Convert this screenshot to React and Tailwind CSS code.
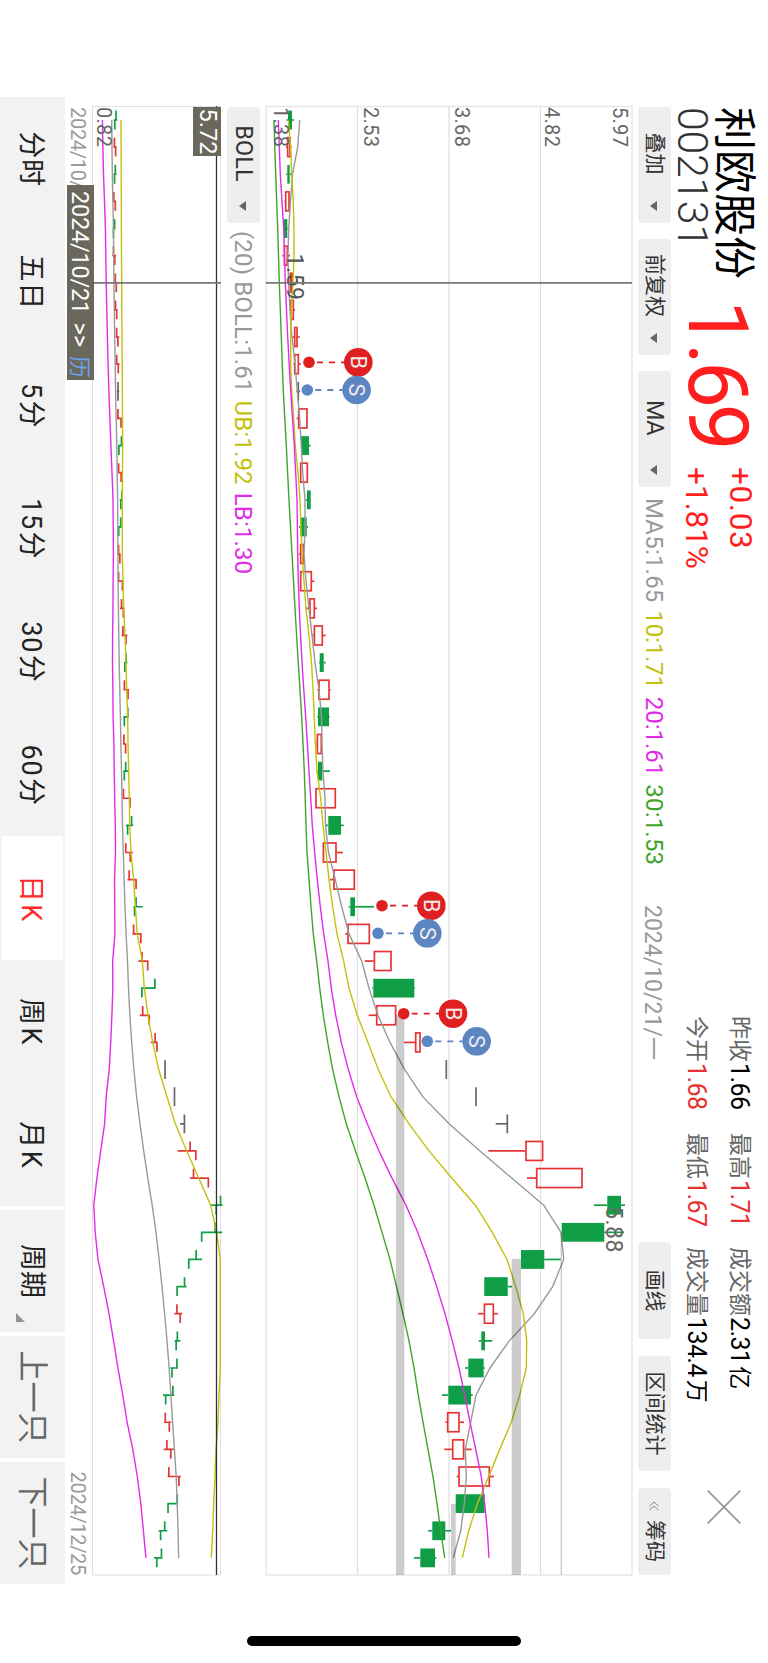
// src/App.jsx

const RED = "#e53535";
const GREEN = "#0f9d46";
const FLAT = "#666666";

// [direction, body bottom, body top, low, high], measured up from the panel floor
const CANDLES = [
  ["down", 22, 26, 20.5, 28],
  ["up", 21, 24.7, 20, 25.7],
  ["down", 21.3, 23.7, 20, 25.3],
  ["up", 19, 23.7, 18.5, 24.3],
  ["down", 18, 21.3, 17.3, 22],
  ["up", 17.7, 22, 16.3, 24],
  ["up", 23.7, 26.7, 22.7, 27.3],
  ["up", 24.3, 28, 23.3, 29],
  ["up", 28, 31.7, 26.3, 33.7],
  ["up", 28, 33, 27.3, 34.7],
  ["flat", 32.3, 32.3, 30.3, 34],
  ["up", 32, 41.7, 30.7, 41.7],
  ["down", 35, 43, 34.7, 44.7],
  ["up", 34, 42, 34, 42],
  ["down", 41, 44.7, 39.7, 44.7],
  ["down", 34.3, 40.7, 33, 42],
  ["up", 34, 38, 33, 38],
  ["up", 34, 46, 34, 48.3],
  ["up", 43.3, 49, 40, 51],
  ["up", 47.7, 57, 45.7, 59.7],
  ["down", 53.7, 57.7, 53, 59.7],
  ["up", 52.3, 63.7, 51.3, 64.7],
  ["down", 52, 63, 51.3, 63.7],
  ["up", 50.7, 56, 49, 56],
  ["down", 52, 56.3, 50.7, 64],
  ["up", 49.3, 70, 49.3, 70],
  ["down", 62.3, 75, 59.3, 77.7],
  ["up", 56.7, 70.7, 56.7, 77],
  ["up", 67.3, 89, 64, 89],
  ["down", 84.3, 89, 82.7, 108],
  ["up", 81.3, 104, 79.3, 104],
  ["up", 107.7, 125.7, 98.7, 125.7],
  ["down", 107.3, 148.3, 106.3, 149],
  ["up", 110, 130.3, 102.7, 130.3],
  ["up", 149, 154.7, 138, 154.7],
  ["flat", 180.3, 180.3, 180.3, 180.3],
  ["flat", 210, 210, 210, 210],
  ["flat", 241.3, 241.3, 229.7, 241.3],
  ["up", 259.3, 277.3, 222.3, 277.3],
  ["up", 270, 316.7, 261, 316.7],
  ["down", 341.3, 355, 328, 359],
  ["down", 295.7, 338.3, 295.7, 358],
  ["down", 255, 278.3, 255, 294.7],
  ["down", 218.3, 241.7, 218.3, 246],
  ["up", 217.7, 228, 212, 232],
  ["down", 215.3, 219, 212.7, 226.3],
  ["down", 202.3, 217.7, 199, 219],
  ["down", 182.3, 205, 176, 206.7],
  ["up", 181, 193.7, 179.3, 198],
  ["up", 186, 198.3, 178.3, 205.7],
  ["up", 192.3, 224, 190.7, 228],
  ["down", 189.7, 218.7, 189.7, 218.7],
  ["down", 166.3, 179.3, 162.3, 185],
  ["down", 154.3, 169, 148, 170.3],
];

const MA5 = [
  33.7, 31.7, 26.5, 24.5, 22.7, 22, 22.5, 24, 26, 29, 31.3, 33.7, 35.3, 36.7,
  39, 39, 38, 40, 43, 46, 49, 53, 55.5, 56, 57, 59, 59.5, 62.5, 69.3, 75.7, 83,
  95.7, 103, 112, 124, 138.7, 156.7, 183, 214, 245.7, 277.7, 295, 297.7, 286.7,
  268.3, 243.3, 224, 210, 204.7, 199.3, 200.3, 198.3, 194.7, 187.3,
];
const MA10 = [
  22.3, 24.7, 25.7, 27.3, 28, 28, 27, 25.3, 24.7, 24.7, 25.7, 27.7, 29.3, 32,
  34, 35, 36, 38, 40, 43, 45.5, 47, 48.3, 49.3, 51, 54.7, 57, 60, 63, 66.7, 71,
  77.7, 83, 91.3, 102, 112.3, 125, 143, 163, 185.7, 209.3, 226.3, 241, 249.7,
  257.3, 260.7, 260.3, 253.7, 245.3, 233.7, 222.7, 211.3, 202.7, 196.3,
];
const MA20 = [
  12.3, 13.3, 14.3, 16, 17.7, 18.5, 19.3, 20.5, 21.7, 23.2, 24.7, 26.5, 28.3,
  29.7, 31, 31.4, 31.7, 32.3, 33.3, 34.6, 36, 37.8, 39.7, 41.4, 43, 44.7, 46.3,
  48.7, 51.3, 54.3, 57.7, 62, 65.3, 69.7, 75.3, 82.3, 90.7, 101.3, 113, 126,
  140, 151.7, 161.7, 170.7, 179, 186.3, 193, 198.7, 204, 209.7, 215.3, 218.7,
  221.3, 223,
];
const MA30 = [
  8, 8.8, 9.7, 10.7, 11.7, 12.5, 13.3, 14.3, 15.3, 16.3, 17.3, 18.8, 20.3,
  21.6, 23, 24.5, 26, 27.5, 29, 30.6, 32.3, 34, 35.7, 37, 38.3, 39.2, 40, 41,
  43, 45, 47.3, 50.7, 53.7, 57.3, 61.7, 66.7, 73, 80.3, 89.5, 99, 108, 116,
  124, 130.5, 137, 143, 148, 152.3, 157, 162, 167, 171, 174.7, 178.7,
];
const UPPER = [
  28.5, 28.6, 28.7, 28.8, 28.9, 29, 29.2, 29.3, 29.5, 29.7, 29.9, 30, 30.2,
  30, 29.8, 29.8, 29.8, 30.5, 31.2, 32.5, 33.5, 34.2, 35.2, 35.5, 36.2, 36.8,
  37.2, 38.5, 41.2, 42.8, 44.8, 49.8, 51.8, 55.5, 60.2, 66.2, 74.5, 82.8, 94.2,
  106.2, 118.2, 124.2, 127.8, 127.8, 127.8, 127.8, 127.8, 126.5, 125.5, 123.5,
  122.5, 121.2, 120.2, 118.8,
];

const MARKERS = [
  { kind: "B", x: 256.3, y: 43 },
  { kind: "S", x: 284, y: 41.3 },
  { kind: "B", x: 799.7, y: 116 },
  { kind: "S", x: 827.3, y: 112 },
  { kind: "B", x: 907.7, y: 137.7 },
  { kind: "S", x: 935.3, y: 161.3 },
];

// unfilled price gaps: [start x, bottom, top]
const GAPS = [
  [909, 130, 138.3],
  [1153, 245.7, 255],
  [1398, 185, 189.7],
  [1126, 294.6, 296],
];

const PRICE_LABELS = [
  ["5.97", 20],
  ["4.82", 88],
  ["3.68", 178.5],
  ["2.53", 269.5],
  ["1.38", 359.5],
];

const TABS = ["分时", "五日", "5 分", "15 分", "30 分", "60 分", "日 K", "周 K", "月 K"];

const cx = (i) => 14 + i * 27.13;
// price panel height -> BOLL panel height
const small = (v) => 15.3 + v * 0.3175;
const color = (dir) => (dir === "up" ? RED : dir === "down" ? GREEN : FLAT);

function Line({ values, floor, stroke }) {
  const points = values.map((v, i) => `${cx(i)},${(floor - v).toFixed(1)}`).join(" ");
  return <polyline points={points} fill="none" stroke={stroke} strokeWidth="1.4" />;
}

function Candle({ index, data, floor }) {
  const [dir, bottom, top, low, high] = data;
  const x = cx(index);
  const c = color(dir);
  return (
    <g stroke={c} strokeWidth="1.7">
      {high > top && <line x1={x} x2={x} y1={floor - high} y2={floor - top} />}
      {low < bottom && <line x1={x} x2={x} y1={floor - low} y2={floor - bottom} />}
      {dir === "flat" && <line x1={x - 9.4} x2={x + 9.4} y1={floor - top} y2={floor - top} />}
      {dir === "up" && (
        <rect
          x={x - 9.5}
          y={floor - top + 0.7}
          width="19"
          height={Math.max(top - bottom - 1.4, 1)}
          fill="none"
        />
      )}
      {dir === "down" && (
        <rect x={x - 9.4} y={floor - top} width="18.8" height={top - bottom} fill={c} stroke="none" />
      )}
    </g>
  );
}

function Marker({ kind, x, y, floor }) {
  const c = kind === "B" ? "#e02020" : "#5c86c2";
  const cy = floor - y;
  return (
    <g>
      <line x1={x} x2={x} y1={cy - 8} y2={cy - 37} stroke={c} strokeWidth="1.8" strokeDasharray="6 6" />
      <circle cx={x} cy={cy} r="5.8" fill={c} />
      <circle cx={x} cy={cy - 49.3} r="14.3" fill={c} />
      <text x={x} y={cy - 41.8} textAnchor="middle" fontSize="21.5" fill="#f3e9ee">
        {kind}
      </text>
    </g>
  );
}

function PriceChart() {
  const floor = 367;
  return (
    <svg width="1470" height="368" className="block overflow-visible">
      <rect x="0.5" y="1" width="1468.5" height="366" fill="none" stroke="#e4e4e4" strokeWidth="1.3" />
      {[92.5, 184, 275.5].map((y) => (
        <line key={y} x1="0" x2="1469" y1={y} y2={y} stroke="#dedede" strokeWidth="1.2" />
      ))}
      {CANDLES.map((c, i) => (
        <Candle key={i} index={i} data={c} floor={floor} />
      ))}
      <Line values={MA5} floor={floor} stroke="#999999" />
      <Line values={MA10} floor={floor} stroke="#c3c10e" />
      <Line values={MA20} floor={floor} stroke="#e22be8" />
      <Line values={MA30} floor={floor} stroke="#3fa52a" />
      {GAPS.map(([x, bottom, top]) => (
        <rect key={x} x={x} y={floor - top} width={1469 - x} height={top - bottom} fill="#000" opacity="0.2" />
      ))}
      {PRICE_LABELS.map(([label, y]) => (
        <text key={label} x="1" y={y} fontSize="20" letterSpacing="0.3" fill="#666">
          {label}
        </text>
      ))}
      <text x="147.5" y="346" fontSize="23" letterSpacing="0.5" fill="#555">1.59</text>
      <text x="1123.5" y="27" textAnchor="middle" fontSize="23" letterSpacing="0.5" fill="#666">5.88</text>
      <line x1="176.8" x2="176.8" y1="1" y2="367" stroke="#777" strokeWidth="1.8" />
      {MARKERS.map((m) => (
        <Marker key={m.x} {...m} floor={floor} />
      ))}
    </svg>
  );
}

function BollChart() {
  const floor = 128.5;
  const mid = MA20.map(small);
  const lower = mid.map((v, i) => 2 * v - UPPER[i]);
  return (
    <svg width="1470" height="129" className="block overflow-visible">
      <rect x="0.5" y="0.5" width="1468.5" height="128" fill="none" stroke="#e0e0e0" />
      {CANDLES.map(([dir, bottom, top, low, high], i) => {
        const x = cx(i);
        const open = floor - small(dir === "down" ? top : bottom);
        const close = floor - small(dir === "down" ? bottom : top);
        return (
          <path
            key={i}
            d={`M${x - 9.4} ${open}H${x}M${x} ${close}H${x + 9.4}M${x} ${floor - small(low) + 0.7}V${floor - small(high) - 0.7}`}
            stroke={color(dir)}
            strokeWidth="1.7"
            fill="none"
          />
        );
      })}
      <Line values={mid} floor={floor} stroke="#999999" />
      <Line values={UPPER} floor={floor} stroke="#c3c10e" />
      <Line values={lower} floor={floor} stroke="#e22be8" />
      <text x="1" y="124.5" fontSize="20" letterSpacing="0.3" fill="#666">0.82</text>
      <line x1="0" x2="1469" y1="4.5" y2="4.5" stroke="#333" strokeWidth="1.3" />
      <line x1="176.8" x2="176.8" y1="0" y2="128" stroke="#777" strokeWidth="1.8" />
    </svg>
  );
}

function DropButton({ label, className = "text-[21px]" }) {
  return (
    <div className={`flex h-[33px] w-[116px] items-center rounded bg-[#eeeeee] text-[#333] ${className}`}>
      <span className="w-[94px] pr-px text-center">{label}</span>
      <svg width="10" height="7" className="mt-[2px]">
        <path d="M0 0H10L5 7Z" fill="#666" />
      </svg>
    </div>
  );
}

function Stat({ label, value, unit, className }) {
  return (
    <div className="flex items-center whitespace-nowrap text-[23px] leading-[30px] text-[#666]">
      <span>{label}</span>
      <span className={`ml-px text-[25px] tracking-[-0.6px] ${className}`}>{value}</span>
      {unit && <span className={`ml-[3px] ${className}`}>{unit}</span>}
    </div>
  );
}

function Header() {
  return (
    <header className="flex h-[97px]">
      <div className="w-[193px] whitespace-nowrap pt-[13px]">
        <div className="text-[43px] leading-[43px] text-black">利欧股份</div>
        <div className="text-[43px] font-light leading-[38px] tracking-[-0.4px] text-[#333]">002131</div>
      </div>
      <div className="w-[167px] pt-[9px] text-[83.5px] leading-[84px] tracking-[-4px] text-[#ff1f1f]">1.69</div>
      <div className="w-[549px] pt-[6px] text-[31.5px] leading-[44px] tracking-[0.6px] text-[#ff1f1f]">
        <div>+0.03</div>
        <div className="tracking-[-0.1px]">+1.81%</div>
      </div>
      <div className="grid h-[93px] w-[474px] grid-cols-[117px_114px_1fr] grid-rows-2 items-center pt-[7px]">
        <Stat label="昨收" value="1.66" className="text-black" />
        <Stat label="最高" value="1.71" className="text-[#e93030]" />
        <Stat label="成交额" value="2.31" unit="亿" className="text-black" />
        <Stat label="今开" value="1.68" className="text-[#e93030]" />
        <Stat label="最低" value="1.67" className="text-[#e93030]" />
        <Stat label="成交量" value="134.4" unit="万" className="text-black" />
      </div>
      <svg width="34" height="34" className="mt-[27px]">
        <path d="M0.7 0.7L33.3 33.3M33.3 0.7L0.7 33.3" stroke="#999" strokeWidth="1.8" />
      </svg>
    </header>
  );
}

function Toolbar() {
  return (
    <div className="flex h-[33px] items-center whitespace-nowrap text-[24px]">
      <div className="flex gap-4">
        <DropButton label="叠加" />
        <DropButton label="前复权" />
        <DropButton label="MA" className="text-[23.5px] tracking-[-0.5px]" />
      </div>
      <div className="ml-[11px] flex w-[407px] gap-2 pt-px">
        <span className="tracking-[0.2px] text-[#999]">MA5:1.65</span>
        <span className="tracking-[-0.2px] text-[#c3c10e]">10:1.71</span>
        <span className="text-[#e22be8]">20:1.61</span>
        <span className="tracking-[0.2px] text-[#3fa52a]">30:1.53</span>
      </div>
      <span className="pt-[5px] text-[23px] text-[#999]">2024/10/21/一</span>
      <div className="ml-auto flex gap-[17px] text-[21px] text-[#333]">
        <div className="flex h-[33px] w-[97px] items-center justify-center rounded bg-[#eeeeee]">画线</div>
        <div className="flex h-[33px] w-[115px] items-center justify-center rounded bg-[#eeeeee]">区间统计</div>
        <div className="flex h-[33px] w-[87px] items-center justify-center gap-[9px] rounded bg-[#eeeeee]">
          <svg width="10" height="10" fill="none" stroke="#888" strokeWidth="1">
            <path d="M5 0.5L1 5L5 9.5M9 0.5L5 5L9 9.5" />
          </svg>
          筹码
        </div>
      </div>
    </div>
  );
}

function PeriodTabs() {
  return (
    <nav className="flex h-[65px] w-[1487px] gap-1 whitespace-nowrap text-[27px] text-[#222]">
      <div className="flex w-[1109px] bg-[#f2f2f2] py-[2px]">
        {TABS.map((t) => (
          <div
            key={t}
            className={`flex flex-1 items-center justify-center pl-px pt-1 tracking-[0.8px] [word-spacing:-6px] ${
              t === "日 K" ? "bg-white text-[#ff2a2a]" : ""
            }`}
          >
            {t}
          </div>
        ))}
      </div>
      <div className="relative flex flex-1 items-center justify-center bg-[#f2f2f2] pt-[2px]">
        周期
        <svg width="9" height="9" className="absolute bottom-4 right-[10px]">
          <path d="M9 0V9H0Z" fill="#8a949c" />
        </svg>
      </div>
      <div className="flex flex-1 items-center justify-center bg-[#f2f2f2] pt-[2px] text-[31px] text-[#666]">
        上一只
      </div>
      <div className="flex flex-1 items-center justify-center bg-[#f2f2f2] pt-[2px] text-[31px] text-[#666]">
        下一只
      </div>
    </nav>
  );
}

export default function App() {
  return (
    <div className="h-[1663px] w-[768px] overflow-hidden bg-white">
      {/* landscape screen held in portrait */}
      <div className="relative h-[768px] w-[1663px] origin-top-left translate-x-[768px] rotate-90 bg-white font-['Roboto','Noto_Sans_CJK_SC',sans-serif]">
        <div className="ml-[107px] w-[1468px]">
          <Header />
          <Toolbar />
        </div>
        <div className="ml-[106px] mt-[5px] w-[1470px]">
          <PriceChart />
        </div>
        <div className="ml-[107px] mt-[5px] flex h-[33px] items-center gap-2 whitespace-nowrap text-[24px] tracking-[0.15px]">
          <DropButton label="BOLL" className="text-[23.5px]" />
          <span className="pt-px text-[#999]">(20) BOLL:1.61</span>
          <span className="pt-px text-[#c3c10e]">UB:1.92</span>
          <span className="pt-px text-[#e22be8]">LB:1.30</span>
        </div>
        <div className="relative ml-[106px] mt-[6px] w-[1470px]">
          <BollChart />
          <div className="absolute left-px top-0 flex h-7 w-[49px] items-center justify-center bg-[#6a675c] text-[23.5px] text-white">
            5.72
          </div>
          <div className="flex h-[27px] items-center justify-between px-px text-[20px] tracking-[-0.3px] text-[#999]">
            <span>2024/10/</span>
            <span>2024/12/25</span>
          </div>
          <div className="absolute bottom-[2px] left-[79px] flex h-[27px] w-[195px] items-center justify-between whitespace-nowrap bg-[#6a675c] pl-[6px] pr-[2px] pt-[2px] text-[23.5px] text-white">
            <span className="tracking-[-0.2px]">2024/10/21</span>
            <span>&gt;&gt;</span>
            <span className="text-[22px] text-[#6f9fe8]">历</span>
          </div>
        </div>
        <div className="ml-[97px]">
          <PeriodTabs />
        </div>
        {/* home indicator */}
        <div className="absolute left-[1636px] top-[247px] h-[274px] w-[10px] rounded-full bg-black" />
      </div>
    </div>
  );
}
